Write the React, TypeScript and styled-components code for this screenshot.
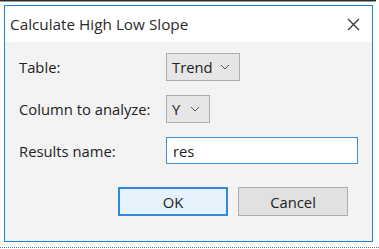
import React from "react";
import styled, { createGlobalStyle } from "styled-components";

const GlobalStyle = createGlobalStyle`
  html, body {
    margin: 0;
    padding: 0;
    background: #ffffff;
  }
  body {
    font-family: "Open Sans", "Noto Sans", sans-serif;
    color: #1e1e1e;
  }
`;

const Page = styled.div`
  width: 379px;
  height: 249px;
  display: flex;
  flex-direction: column;
  overflow: hidden;
`;

const TopRule = styled.div`
  height: 1px;
  background: #2a2a2a;
  border-bottom: 1px solid #9a9a9a;
  margin-right: 3px;
`;

const Window = styled.div`
  margin: 3px 6px 0 4px;
  border: 1px solid #1a83d4;
  display: flex;
  flex-direction: column;
  background: #f3f3f3;
`;

const TitleBar = styled.div`
  height: 36px;
  background: #ffffff;
  display: flex;
  align-items: center;
  justify-content: space-between;
  padding: 0 12px 0 5px;
`;

const Title = styled.div`
  font-size: 15.3px;
  color: #2b2b2b;
`;

const CloseButton = styled.div`
  width: 14px;
  height: 14px;
  display: flex;
  align-items: center;
  justify-content: center;
  color: #333;
`;

const Body = styled.div`
  padding: 11px 24px 25px 14px;
  display: flex;
  flex-direction: column;
`;

const Form = styled.div`
  display: grid;
  grid-template-columns: 147px auto;
  row-gap: 14px;
  align-items: center;
`;

const Label = styled.div`
  font-size: 14.8px;
  color: #222;
`;

const Select = styled.div<{ $width: number }>`
  width: ${(p) => p.$width}px;
  height: 28px;
  box-sizing: border-box;
  border: 1px solid #adadad;
  background: #e6e6e6;
  display: flex;
  align-items: center;
  justify-content: space-between;
  padding: 0 9px 0 5px;
  font-size: 14.8px;
  color: #222;
`;

const Input = styled.div`
  width: 192px;
  height: 27px;
  box-sizing: border-box;
  border: 1px solid #3c8fd8;
  background: #ffffff;
  display: flex;
  align-items: center;
  padding: 0 6px;
  font-size: 14.8px;
  color: #222;
`;

const Buttons = styled.div`
  display: flex;
  justify-content: flex-end;
  gap: 10px;
  margin-top: 23px;
`;

const Button = styled.div<{ $primary?: boolean }>`
  width: 110px;
  height: 29px;
  box-sizing: border-box;
  border: ${(p) => (p.$primary ? "2px solid #2f8ad8" : "1px solid #adadad")};
  background: ${(p) => (p.$primary ? "#e5f1fb" : "#e1e1e1")};
  display: flex;
  align-items: center;
  justify-content: center;
  font-size: 14.8px;
  color: #222;
`;

const BottomRule = styled.div`
  margin-top: 5px;
  border-top: 1px dotted #777;
`;

const Chevron = () => (
  <svg width="10" height="6" viewBox="0 0 10 6">
    <path d="M1 1 L5 5 L9 1" fill="none" stroke="#555" strokeWidth="1" />
  </svg>
);

const CloseIcon = () => (
  <svg width="13" height="13" viewBox="0 0 13 13">
    <path d="M1 1 L12 12 M12 1 L1 12" stroke="#333" strokeWidth="1.2" />
  </svg>
);

const App: React.FC = () => {
  return (
    <>
      <GlobalStyle />
      <Page>
        <TopRule />
        <Window>
          <TitleBar>
            <Title>Calculate High Low Slope</Title>
            <CloseButton>
              <CloseIcon />
            </CloseButton>
          </TitleBar>
          <Body>
            <Form>
              <Label>Table:</Label>
              <Select $width={74}>
                Trend
                <Chevron />
              </Select>
              <Label>Column to analyze:</Label>
              <Select $width={44}>
                Y
                <Chevron />
              </Select>
              <Label>Results name:</Label>
              <Input>res</Input>
            </Form>
            <Buttons>
              <Button $primary>OK</Button>
              <Button>Cancel</Button>
            </Buttons>
          </Body>
        </Window>
        <BottomRule />
      </Page>
    </>
  );
};

export default App;
